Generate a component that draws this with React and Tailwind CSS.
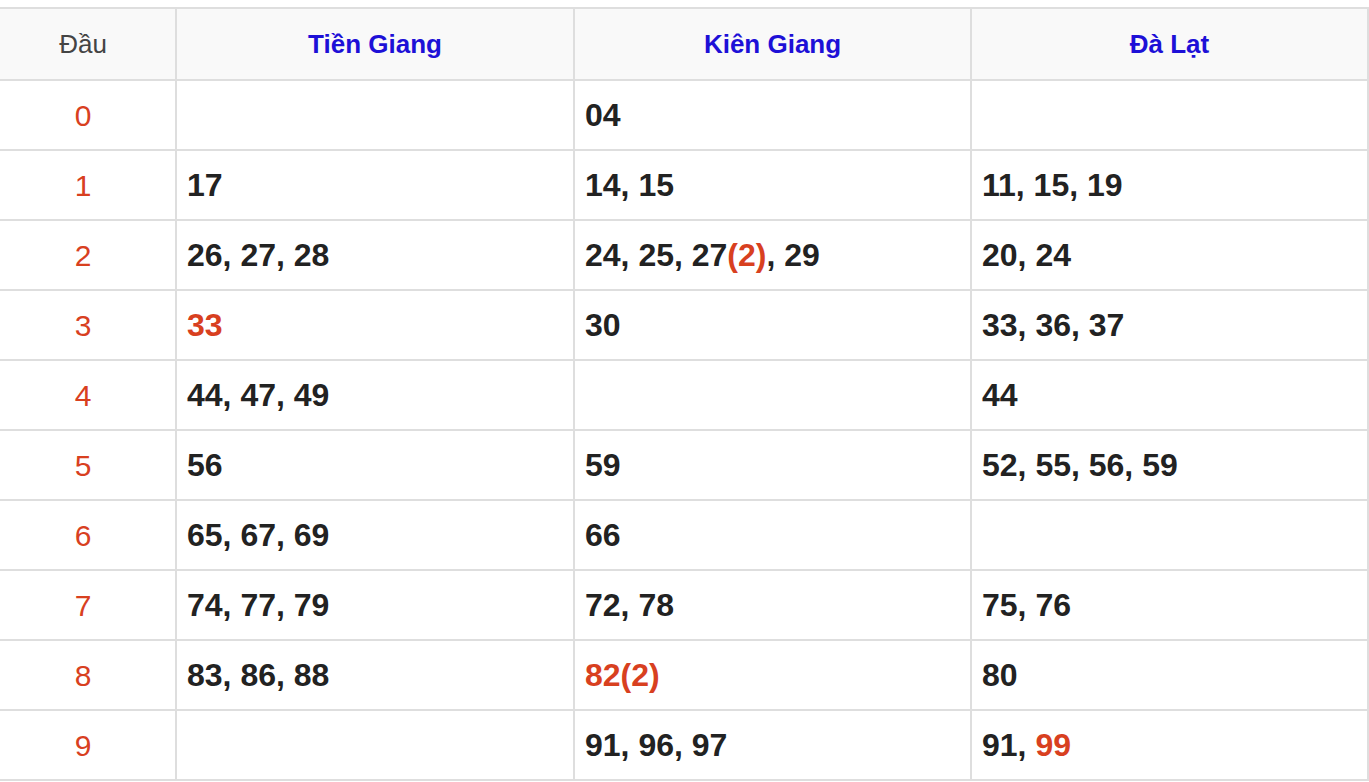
import React from "react";

const R = ({ children }) => <span className="text-[#d8401f]">{children}</span>;

const rows = [
  ["0", null, <>04</>, null],
  ["1", <>17</>, <>14, 15</>, <>11, 15, 19</>],
  ["2", <>26, 27, 28</>, <>24, 25, 27<R>(2)</R>, 29</>, <>20, 24</>],
  ["3", <R>33</R>, <>30</>, <>33, 36, 37</>],
  ["4", <>44, 47, 49</>, null, <>44</>],
  ["5", <>56</>, <>59</>, <>52, 55, 56, 59</>],
  ["6", <>65, 67, 69</>, <>66</>, null],
  ["7", <>74, 77, 79</>, <>72, 78</>, <>75, 76</>],
  ["8", <>83, 86, 88</>, <R>82(2)</R>, <>80</>],
  ["9", null, <>91, 96, 97</>, <>91, <R>99</R></>],
];

export default function App() {
  const font = { fontFamily: '"Liberation Sans", Arial, sans-serif' };
  return (
    <div className="w-[1369px] h-[782px] bg-white pt-[7px] overflow-hidden" style={font}>
      <div className="grid grid-cols-[175px_398px_397px_399px] border-t-2 border-[#dedede]">
        <div className="h-[72px] bg-[#f9f9f9] border-b-2 border-[#dedede] flex items-center justify-center pr-[9px] text-[26px] text-[#444]">
          Đầu
        </div>
        {["Tiền Giang", "Kiên Giang", "Đà Lạt"].map((h, i) => (
          <div
            key={h}
            className={`h-[72px] bg-[#f9f9f9] border-b-2 border-l-2 border-[#dedede] flex items-center justify-center text-[26px] font-bold text-[#1d10d7] ${i === 2 ? "border-r-2" : ""}`}
          >
            {h}
          </div>
        ))}
        {rows.map((r) => (
          <React.Fragment key={r[0]}>
            <div className="h-[70px] border-b-2 border-[#dedede] flex items-center justify-center pr-[9px] text-[30px] text-[#d8401f]">
              {r[0]}
            </div>
            {[r[1], r[2], r[3]].map((c, i) => (
              <div
                key={i}
                className={`h-[70px] border-b-2 border-l-2 border-[#dedede] flex items-center pl-[10px] text-[32px] font-bold text-[#222] ${i === 2 ? "border-r-2" : ""}`}
              >
                <span className="whitespace-pre">{c}</span>
              </div>
            ))}
          </React.Fragment>
        ))}
      </div>
    </div>
  );
}
